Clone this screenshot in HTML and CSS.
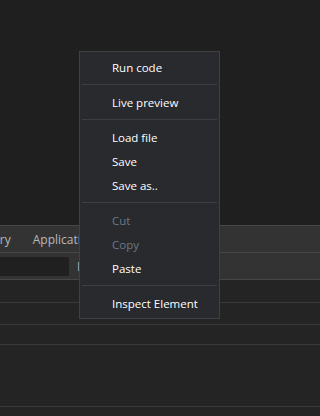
FILE: index.html
```html
<!DOCTYPE html>
<html>
<head>
<meta charset="utf-8">
<link rel="stylesheet" href="styles.css">
</head>
<body>
<div class="page">
  <div class="top"></div>
  <div class="tabs">
    <span class="tab">Memory</span>
    <span class="tab">Application</span>
    <span class="tab">Security</span>
  </div>
  <div class="toolbar">
    <div class="filter"></div>
    <span class="tool-label">Invert</span>
  </div>
  <div class="row r1"></div>
  <div class="row r2"></div>
  <div class="row r3"></div>
  <div class="row r4"></div>
  <div class="row r5"></div>
</div>
<div class="menu">
  <div class="item">Run code</div>
  <div class="sep"></div>
  <div class="item">Live preview</div>
  <div class="sep"></div>
  <div class="item">Load file</div>
  <div class="item">Save</div>
  <div class="item">Save as..</div>
  <div class="sep"></div>
  <div class="item disabled">Cut</div>
  <div class="item disabled">Copy</div>
  <div class="item">Paste</div>
  <div class="sep"></div>
  <div class="item">Inspect Element</div>
</div>
</body>
</html>
```
FILE: styles.css
```css
html, body {
  margin: 0;
  padding: 0;
  background: #1f1f1f;
  font-family: "Open Sans", "Noto Sans", sans-serif;
  overflow: hidden;
}
.page {
  width: 320px;
  height: 416px;
  display: flex;
  flex-direction: column;
  background: #242424;
}
.top {
  height: 225px;
  flex: none;
  background: #1f1f1f;
}
.tabs {
  flex: none;
  height: 26px;
  border-top: 1px solid #474747;
  border-bottom: 1px solid #474747;
  background: #333333;
  display: flex;
  align-items: center;
  gap: 22px;
  margin-left: -36px;
  font-size: 12px;
  color: #b8b8b8;
  white-space: nowrap;
}
.toolbar {
  flex: none;
  height: 26px;
  border-bottom: 1px solid #474747;
  background: #333333;
  display: flex;
  align-items: center;
  gap: 8px;
  font-size: 12px;
  color: #b8b8b8;
}
.filter {
  width: 69px;
  height: 19px;
  background: #202020;
}
.row {
  flex: none;
  border-bottom: 1px solid #3a3a3a;
  background: #242424;
}
.r1 { height: 22px; }
.r2 { height: 21px; }
.r3 { height: 19px; }
.r4 { height: 61px; }
.r5 { height: 20px; border-bottom: none; }

.menu {
  position: absolute;
  left: 79px;
  top: 51px;
  width: 141px;
  height: 268px;
  box-sizing: border-box;
  border: 1px solid #3e4045;
  background: #282a2e;
  padding: 3px 1px 2px 1px;
  font-size: 11.5px;
  color: #ffffff;
}
.item {
  height: 24px;
  box-sizing: border-box;
  padding-top: 1px;
  line-height: 23px;
  padding-left: 31px;
  white-space: nowrap;
}
.item.disabled {
  color: #6c7984;
}
.sep {
  height: 1px;
  margin: 5px 1px;
  background: #3c3e42;
}
```
